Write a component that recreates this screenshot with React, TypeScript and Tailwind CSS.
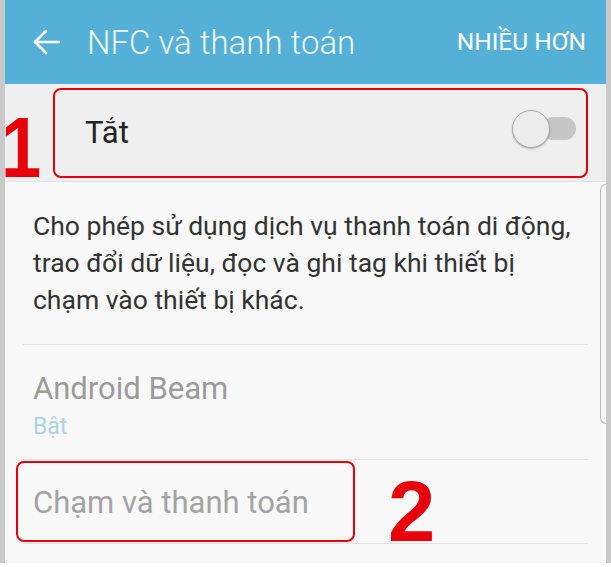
import { useState } from 'react';

function BackArrow() {
  return (
    <svg width="28" height="26" viewBox="0 0 28 26" fill="none" stroke="currentColor" strokeWidth="2.6" strokeLinecap="round" strokeLinejoin="round">
      <path d="M2 13h24" />
      <path d="M13 2 2 13l11 11" />
    </svg>
  );
}

function Toggle({ on, onChange }: { on: boolean; onChange: () => void }) {
  return (
    <button onClick={onChange} className="relative w-[64px] h-[40px] shrink-0">
      <span className="absolute right-0 top-[7px] w-[34px] h-[23px] rounded-full bg-[#c6c6c6]" />
      <span className="absolute left-0 top-0 w-[38px] h-[38px] rounded-full bg-[#ececec] border border-[#a8a8a8] shadow-[0_1px_2px_rgba(0,0,0,0.25)]" />
    </button>
  );
}

export default function App() {
  const [nfcOn, setNfcOn] = useState(false);

  return (
    <div className="w-[611px] h-[567px] bg-white font-['Roboto',sans-serif]">
      <div className="flex h-[563px]">
        <div className="w-[5px] bg-[#c9c9c9]" />

        <div className="flex-1 flex flex-col relative">
          {/* header */}
          <div className="h-[84px] bg-[#54b0d7] flex items-center text-white">
            <div className="pl-[28px] pr-[26px] text-white">
              <BackArrow />
            </div>
            <span className="text-[33px] font-light text-[#eef8fc] leading-none">NFC và thanh toán</span>
            <span className="ml-auto pr-[20px] text-[24.5px] leading-none">NHIỀU HƠN</span>
          </div>

          {/* master switch */}
          <div className="h-[98px] bg-[#efefef] pt-[4px] relative border-b border-[#e3e3e3]">
            <span className="absolute left-[-4px] top-[21px] origin-left scale-x-[0.85] text-[85px] font-bold leading-none text-[#e8000b] font-['Liberation_Sans',sans-serif]">1</span>
            <div className="ml-[48px] mr-[18px] h-[90px] border-2 border-[#e3000b] rounded-[8px] flex items-center pl-[30px] pr-[10px]">
              <span className="text-[31px] text-[#222]">{nfcOn ? 'Bật' : 'Tắt'}</span>
              <div className="ml-auto">
                <Toggle on={nfcOn} onChange={() => setNfcOn(!nfcOn)} />
              </div>
            </div>
          </div>

          {/* settings list */}
          <div className="flex-1 bg-[#f8f8f8] relative">
            <div className="absolute right-[0px] top-[2px] w-[6px] h-[240px] border-l border-y border-[#b9b9b9] rounded-l-[14px]" />

            <div className="pl-[28px] pr-[30px] pt-[25px] pb-[26px] text-[26.5px] leading-[37px] text-[#333]">
              Cho phép sử dụng dịch vụ thanh toán di động, trao đổi dữ liệu, đọc và ghi tag khi thiết bị chạm vào thiết bị khác.
            </div>

            <div className="mx-[18px] border-t border-[#e2e2e2]" />

            <div className="pl-[28px] pt-[26px] pb-[19px]">
              <div className="text-[31px] leading-[36px] text-[#9b9b9b]">Android Beam</div>
              <div className="mt-[6px] text-[23px] leading-[27px] text-[#a9d3e3]">Bật</div>
            </div>

            <div className="mx-[18px] border-t border-[#e2e2e2]" />

            <div className="relative h-[83px] pl-[28px] pt-[25px]">
              <div className="text-[31px] leading-[36px] text-[#a3a3a3]">Chạm và thanh toán</div>
              <div className="absolute left-[11px] top-[1px] w-[339px] h-[81px] border-2 border-[#e3000b] rounded-[8px]" />
              <span className="absolute left-[383px] top-[9px] text-[85px] font-bold leading-none text-[#e8000b] font-['Liberation_Sans',sans-serif]">2</span>
            </div>

            <div className="mx-[18px] border-t border-[#e2e2e2]" />
          </div>
        </div>

        <div className="w-[5px] bg-[#c9c9c9]" />
      </div>
    </div>
  );
}
